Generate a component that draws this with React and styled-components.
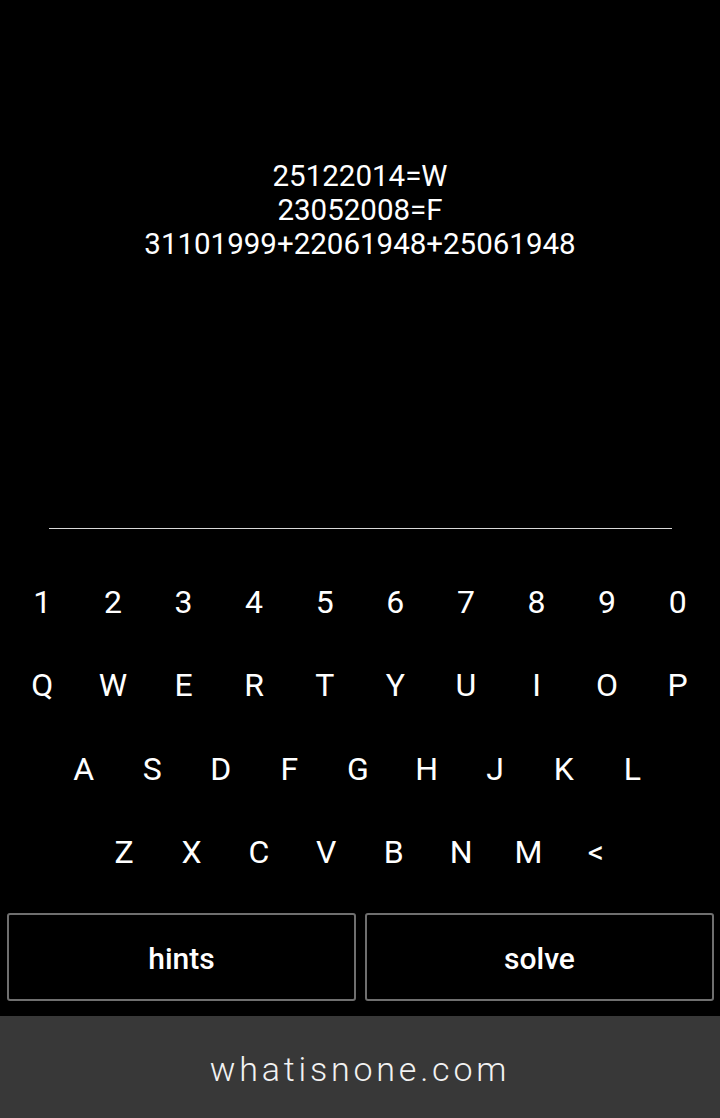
import React from 'react'
import styled, { createGlobalStyle } from 'styled-components'

const GlobalStyle = createGlobalStyle`
  html, body {
    margin: 0;
    padding: 0;
    background: #000;
  }
  body {
    font-family: Roboto, "Noto Sans", sans-serif;
    color: #fff;
  }
`

const Screen = styled.div`
  width: 720px;
  height: 1118px;
  display: flex;
  flex-direction: column;
  background: #000;
  overflow: hidden;
`

const Puzzle = styled.div`
  height: 528px;
  padding-top: 159px;
  box-sizing: border-box;
  text-align: center;
  font-size: 29.5px;
  line-height: 34px;
  color: #fff;
`

const AnswerLine = styled.div`
  margin: 0 48px 0 49px;
  height: 1px;
  background: #d8d8d8;
`

const Keyboard = styled.div`
  padding-top: 31px;
  display: flex;
  flex-direction: column;
  align-items: center;
`

const KeyRow = styled.div`
  height: 83.5px;
  margin-right: ${({ shift = 0 }) => shift}px;
  display: grid;
  grid-template-columns: repeat(${({ count }) => count}, ${({ size }) => size}px);
`

const Key = styled.button`
  background: none;
  border: none;
  padding: 0;
  color: #fff;
  font-family: Roboto, sans-serif;
  font-size: 32px;
  font-weight: 400;
  display: flex;
  align-items: center;
  justify-content: center;
`

const Actions = styled.div`
  margin-top: 19px;
  padding: 0 6px 0 7px;
  display: grid;
  grid-template-columns: 1fr 1fr;
  gap: 9px;
`

const ActionButton = styled.button`
  height: 88px;
  padding-top: 3px;
  background: #000;
  border: 2px solid #6f6f6f;
  border-radius: 3px;
  color: #fff;
  font-family: Roboto, sans-serif;
  font-size: 30px;
  font-weight: 500;
`

const Footer = styled.div`
  margin-top: auto;
  height: 102px;
  padding-top: 4px;
  box-sizing: border-box;
  background: #383838;
  display: flex;
  align-items: center;
  justify-content: center;
  font-size: 34px;
  font-weight: 300;
  letter-spacing: 3.8px;
  color: #f2f2f2;
`

const rows = [
  { keys: '1234567890', size: 70.6 },
  { keys: 'QWERTYUIOP', size: 70.6 },
  { keys: 'ASDFGHJKL', size: 68.6, shift: 4 },
  { keys: 'ZXCVBNM<', size: 67.4 },
]

export default function App() {
  return (
    <Screen>
      <GlobalStyle />
      <Puzzle>
        <div>25122014=W</div>
        <div>23052008=F</div>
        <div>31101999+22061948+25061948</div>
      </Puzzle>
      <AnswerLine />
      <Keyboard>
        {rows.map(row => (
          <KeyRow
            key={row.keys}
            count={row.keys.length}
            size={row.size}
            shift={row.shift}>
            {row.keys.split('').map(k => (
              <Key key={k}>{k}</Key>
            ))}
          </KeyRow>
        ))}
      </Keyboard>
      <Actions>
        <ActionButton>hints</ActionButton>
        <ActionButton>solve</ActionButton>
      </Actions>
      <Footer>whatisnone.com</Footer>
    </Screen>
  )
}
